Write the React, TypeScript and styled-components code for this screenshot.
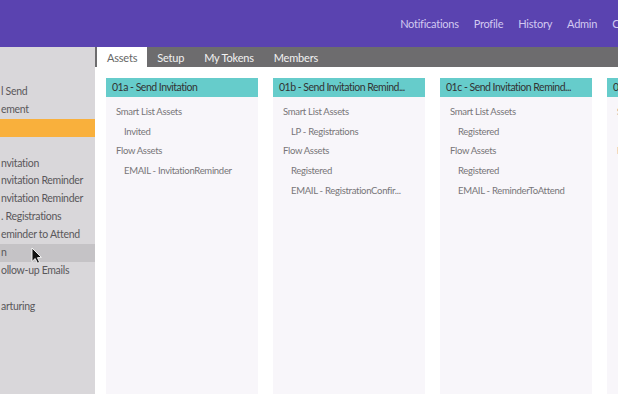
import React from 'react';
import styled, { createGlobalStyle } from 'styled-components';

const GlobalStyle = createGlobalStyle`
  html, body, #root {
    margin: 0;
    padding: 0;
    height: 100%;
    overflow: hidden;
  }
  body {
    font-family: 'Lato', 'Noto Sans', sans-serif;
    background: #ffffff;
  }
`;

interface AssetItem {
  label: string;
  level: number;
}

interface Program {
  title: string;
  items: AssetItem[];
}

const programs: Program[] = [
  {
    title: '01a - Send Invitation',
    items: [
      { label: 'Smart List Assets', level: 0 },
      { label: 'Invited', level: 1 },
      { label: 'Flow Assets', level: 0 },
      { label: 'EMAIL - InvitationReminder', level: 1 },
    ],
  },
  {
    title: '01b - Send Invitation Remind...',
    items: [
      { label: 'Smart List Assets', level: 0 },
      { label: 'LP - Registrations', level: 1 },
      { label: 'Flow Assets', level: 0 },
      { label: 'Registered', level: 1 },
      { label: 'EMAIL - RegistrationConfir...', level: 1 },
    ],
  },
  {
    title: '01c - Send Invitation Remind...',
    items: [
      { label: 'Smart List Assets', level: 0 },
      { label: 'Registered', level: 1 },
      { label: 'Flow Assets', level: 0 },
      { label: 'Registered', level: 1 },
      { label: 'EMAIL - ReminderToAttend', level: 1 },
    ],
  },
  {
    title: '01d - Send Reminder to Attend',
    items: [
      { label: 'Smart List Assets', level: 0 },
      { label: 'Registered', level: 1 },
      { label: 'Flow Assets', level: 0 },
    ],
  },
];

type Highlight = 'none' | 'active' | 'hover';

const sideItems: { label: string; highlight: Highlight }[] = [
  { label: 'l Send', highlight: 'none' },
  { label: 'ement', highlight: 'none' },
  { label: '', highlight: 'active' },
  { label: '', highlight: 'none' },
  { label: 'nvitation', highlight: 'none' },
  { label: 'nvitation Reminder', highlight: 'none' },
  { label: 'nvitation Reminder', highlight: 'none' },
  { label: '. Registrations', highlight: 'none' },
  { label: 'eminder to Attend', highlight: 'none' },
  { label: 'n', highlight: 'hover' },
  { label: 'ollow-up Emails', highlight: 'none' },
  { label: '', highlight: 'none' },
  { label: 'arturing', highlight: 'none' },
];

const navLinks = ['Notifications', 'Profile', 'History', 'Admin', 'Community'];
const tabs = ['Assets', 'Setup', 'My Tokens', 'Members'];

const App: React.FC = () => (
  <Root>
    <GlobalStyle />
    <Header>
      <Nav>
        {navLinks.map((link) => (
          <NavLink key={link}>{link}</NavLink>
        ))}
      </Nav>
    </Header>
    <Body>
      <Sidebar>
        {sideItems.map((item, i) => (
          <SideItem key={i} highlight={item.highlight}>
            {item.label}
          </SideItem>
        ))}
        <Cursor width="11" height="17" viewBox="0 0 11 17">
          <path
            d="M1 1 L1 14.5 L4.2 11.5 L6.5 16.2 L8.6 15.3 L6.4 10.7 L10.4 10.4 Z"
            fill="#111"
            stroke="#fff"
            strokeWidth="0.9"
            strokeLinejoin="round"
          />
        </Cursor>
      </Sidebar>
      <Main>
        <TabBar>
          {tabs.map((tab, i) => (
            <Tab key={tab} active={i === 0}>
              {tab}
            </Tab>
          ))}
        </TabBar>
        <Cards>
          {programs.map((program, i) => (
            <Card key={i}>
              <CardHeader>{program.title}</CardHeader>
              <CardBody>
                {program.items.map((item, j) => (
                  <AssetRow key={j} level={item.level}>
                    {item.label}
                  </AssetRow>
                ))}
              </CardBody>
            </Card>
          ))}
        </Cards>
      </Main>
    </Body>
  </Root>
);

export default App;

const Root = styled.div`
  display: flex;
  flex-direction: column;
  height: 100%;
`;

const Header = styled.header`
  height: 47px;
  flex-shrink: 0;
  background: #5a43b0;
  display: flex;
  align-items: center;
  justify-content: flex-end;
  overflow: hidden;
`;

const Nav = styled.nav`
  display: flex;
  gap: 15px;
  margin-right: -48px;
`;

const NavLink = styled.span`
  font-size: 11px;
  letter-spacing: -0.25px;
  color: #d2c9f0;
  white-space: nowrap;
`;

const Body = styled.div`
  flex: 1;
  display: flex;
  min-height: 0;
`;

const Sidebar = styled.aside`
  position: relative;
  width: 95px;
  flex-shrink: 0;
  background: #d9d7da;
  padding-top: 36px;
  box-sizing: border-box;
  overflow: hidden;
`;

const SideItem = styled.div<{ highlight: Highlight }>`
  height: 17.9px;
  line-height: 17.9px;
  font-size: 10.5px;
  letter-spacing: -0.3px;
  color: #5a585b;
  white-space: nowrap;
  padding-left: 1px;
  background: ${({ highlight }) =>
    highlight === 'active' ? '#f9b03c' : highlight === 'hover' ? '#c5c3c6' : 'transparent'};
`;

const Cursor = styled.svg`
  position: absolute;
  left: 31px;
  top: 200px;
`;

const Main = styled.main`
  flex: 1;
  display: flex;
  flex-direction: column;
  min-width: 0;
`;

const TabBar = styled.div`
  height: 20px;
  flex-shrink: 0;
  background: #6d6c6e;
  display: flex;
  padding-left: 2px;
`;

const Tab = styled.div<{ active: boolean }>`
  padding: 0 10px;
  display: flex;
  align-items: center;
  font-size: 11px;
  letter-spacing: -0.2px;
  color: ${({ active }) => (active ? '#666' : '#f2f2f2')};
  background: ${({ active }) => (active ? '#ffffff' : 'transparent')};
  white-space: nowrap;
`;

const Cards = styled.div`
  flex: 1;
  display: flex;
  gap: 15px;
  padding: 11px 0 0 11px;
  overflow: hidden;
`;

const Card = styled.section`
  width: 152px;
  flex-shrink: 0;
  display: flex;
  flex-direction: column;
  background: #f8f6fa;
`;

const CardHeader = styled.div`
  height: 19px;
  line-height: 19px;
  background: #66cccb;
  color: #333;
  font-size: 10.5px;
  letter-spacing: -0.5px;
  padding-left: 6px;
  white-space: nowrap;
  overflow: hidden;
`;

const CardBody = styled.div`
  padding-top: 5px;
`;

const AssetRow = styled.div<{ level: number }>`
  height: 19.7px;
  line-height: 19.7px;
  font-size: 9.5px;
  letter-spacing: -0.3px;
  color: #777578;
  padding-left: ${({ level }) => (level ? 18 : 10)}px;
  white-space: nowrap;
  overflow: hidden;
`;
